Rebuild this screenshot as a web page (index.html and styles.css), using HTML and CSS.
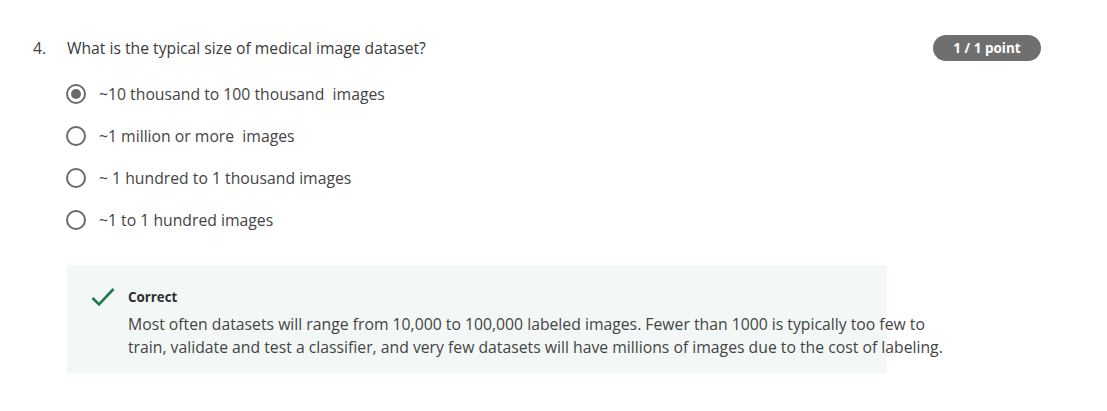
FILE: index.html
```html
<!DOCTYPE html>
<html>
<head>
<meta charset="utf-8">
<link rel="stylesheet" href="styles.css">
</head>
<body>
<div class="page">
  <div class="question">
    <span class="num">4.</span>
    <span class="qtext">What is the typical size of medical image dataset?</span>
    <span class="badge">1 / 1 point</span>
  </div>
  <div class="options">
    <div class="opt"><span class="radio checked"></span><span class="label">~10 thousand to 100 thousand&nbsp; images</span></div>
    <div class="opt"><span class="radio"></span><span class="label">~1 million or more&nbsp; images</span></div>
    <div class="opt"><span class="radio"></span><span class="label">~ 1 hundred to 1 thousand images</span></div>
    <div class="opt"><span class="radio"></span><span class="label">~1 to 1 hundred images</span></div>
  </div>
  <div class="feedback">
    <svg class="check" width="24" height="20" viewBox="0 0 24 20"><path d="M1.5 11 L8 17.5 L22.5 2" fill="none" stroke="#1f7a4d" stroke-width="2.6"/></svg>
    <div class="fbody">
      <div class="ftitle">Correct</div>
      <div class="ftext">Most often datasets will range from 10,000 to 100,000 labeled images. Fewer than 1000 is typically too few to<br>train, validate and test a classifier, and very few datasets will have millions of images due to the cost of labeling.</div>
    </div>
  </div>
</div>
</body>
</html>
```
FILE: styles.css
```css
* { box-sizing: border-box; }
html, body { margin: 0; padding: 0; background: #fff; }
body { font-family: "Open Sans", "Noto Sans", sans-serif; color: #333; }
.page { padding: 35px 66px 0 33px; width: 1107px; }
.question { display: flex; align-items: center; height: 26px; font-size: 15.7px; }
.num { width: 34px; color: #444; }
.qtext { flex: 1; color: #3a3a3a; }
.badge { background: #6f6f6f; color: #fff; font-weight: 700; font-size: 13.5px; height: 26px; width: 108px; border-radius: 13px; display: flex; align-items: center; justify-content: center; }
.options { padding: 12px 0 0 33px; }
.opt { display: flex; align-items: center; height: 42px; font-size: 15.75px; color: #444; }
.radio { width: 20px; height: 20px; border: 2px solid #6a6a6a; border-radius: 50%; margin-right: 13px; display: flex; align-items: center; justify-content: center; flex: none; }
.radio.checked::after { content: ""; width: 10px; height: 10px; border-radius: 50%; background: #6a6a6a; }
.feedback { margin: 24px 0 0 34px; width: 820px; height: 108px; background: #f3f8f7; display: flex; padding: 22px 0 0 24px; }
.check { margin-right: 13px; flex: none; }
.fbody { white-space: nowrap; }
.ftitle { font-weight: 700; font-size: 13.3px; color: #2e2e2e; line-height: 20px; margin-bottom: 6px; }
.ftext { font-size: 15.75px; line-height: 23px; color: #444; }
```
